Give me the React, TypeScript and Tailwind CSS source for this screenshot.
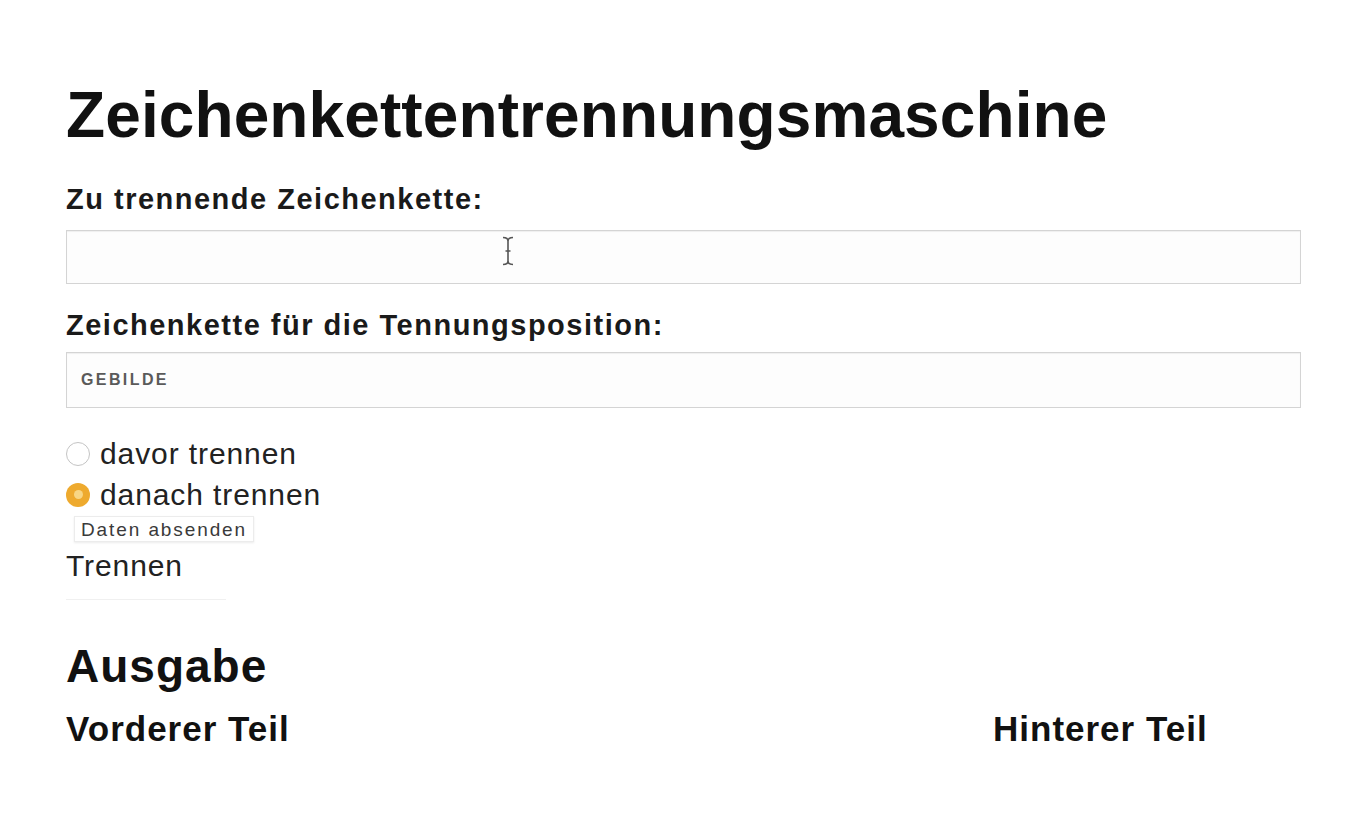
export default function App() {
  return (
    <div className="min-h-[816px] w-[1356px] bg-white text-[#111] font-['Liberation_Sans',Arial,sans-serif]">
      <div className="pl-[66px] pr-[55px] pt-[78px]">
        <h1 className="text-[64px] leading-[74px] font-bold tracking-[0.1px]">Zeichenkettentrennungsmaschine</h1>

        <div className="mt-[30px] text-[29px] leading-[34px] font-bold tracking-[1.5px] text-[#1a1a1a]">Zu trennende Zeichenkette:</div>
        <div className="mt-[14px] h-[54px] border border-[#d4d4d4] bg-[#fdfdfd] shadow-[inset_0_1px_1px_rgba(0,0,0,0.06)] relative">
          {/* Textcursor */}
          <svg className="absolute left-[434px] top-[5px]" width="14" height="30" viewBox="0 0 14 30">
            <path d="M2 1.5 Q7 1.5 7 5 Q7 1.5 12 1.5 M7 5 V25 M2 28.5 Q7 28.5 7 25 Q7 28.5 12 28.5 M4.5 15 H9.5" fill="none" stroke="#555" strokeWidth="1.6" />
          </svg>
        </div>

        <div className="mt-[24px] text-[29px] leading-[34px] font-bold tracking-[1.5px] text-[#1a1a1a]">Zeichenkette für die Tennungsposition:</div>
        <div className="mt-[10px] h-[56px] border border-[#d4d4d4] bg-[#fdfdfd] shadow-[inset_0_1px_1px_rgba(0,0,0,0.06)] flex items-center pl-[14px]">
          <span className="text-[16px] font-bold text-[#5a5a5a] tracking-[2.4px]">GEBILDE</span>
        </div>

        <div className="mt-[25px] flex flex-col">
          <label className="flex items-center gap-[10px] text-[30px] leading-[41px] text-[#222] tracking-[0.9px]">
            <span className="w-[24px] h-[24px] rounded-full border border-[#c4c4c4] bg-white" />
            davor trennen
          </label>
          <label className="flex items-center gap-[10px] text-[30px] leading-[41px] text-[#222] tracking-[0.9px]">
            <span className="w-[24px] h-[24px] rounded-full bg-[#eeaa2e] flex items-center justify-center">
              <span className="w-[9px] h-[9px] rounded-full bg-[#f8d684]" />
            </span>
            danach trennen
          </label>
        </div>
        <div className="mt-[1px] w-[200px]">
          <div className="ml-[8px] inline-block px-[6px] h-[26px] leading-[26px] bg-white border border-[#ececec] shadow-[0_1px_2px_rgba(0,0,0,0.08)] text-[19px] text-[#3a3a3a] tracking-[1.9px]">Daten absenden</div>
          <div className="mt-[5px] text-[30px] leading-[36px] text-[#222] tracking-[0.9px]">Trennen</div>
          <div className="h-[16px] w-[160px] border-b border-[#f0f0f0]" />
        </div>

        <h2 className="mt-[40px] text-[46px] leading-[52px] font-bold tracking-[1px]">Ausgabe</h2>
        <div className="mt-[17px] flex text-[35px] leading-[40px] font-bold tracking-[1px]">
          <div className="w-[927px]">Vorderer Teil</div>
          <div>Hinterer Teil</div>
        </div>
      </div>
    </div>
  );
}
